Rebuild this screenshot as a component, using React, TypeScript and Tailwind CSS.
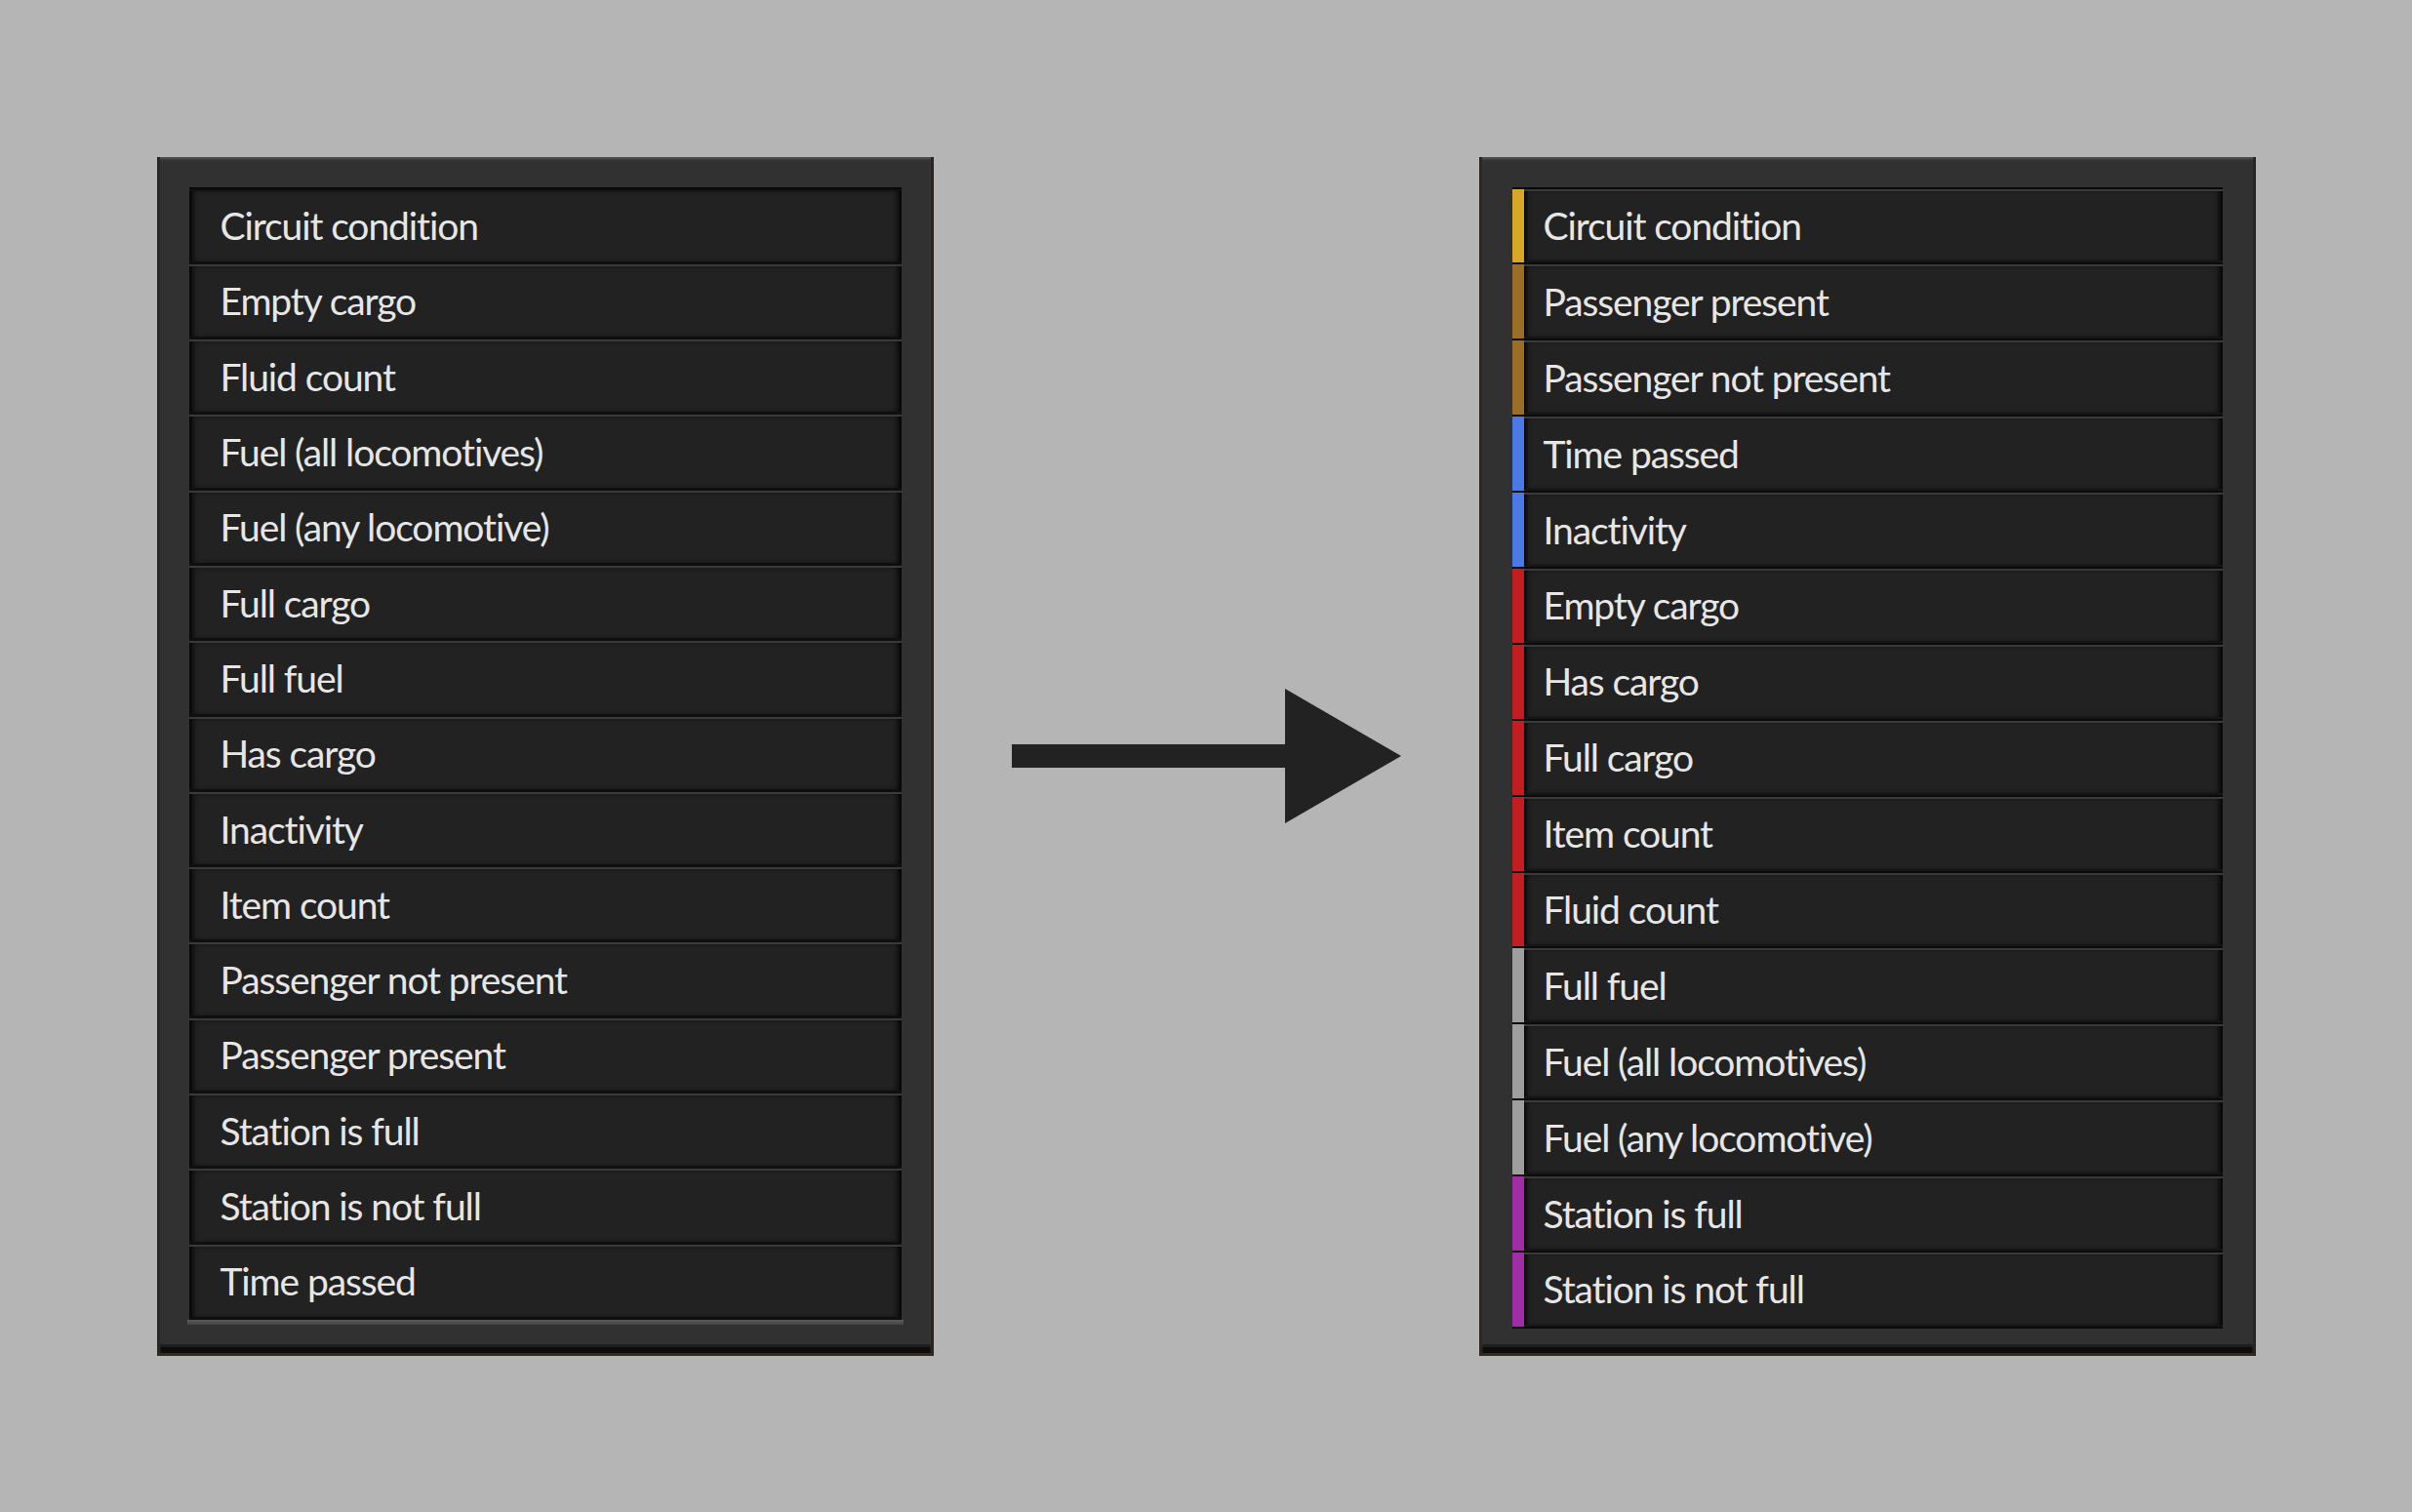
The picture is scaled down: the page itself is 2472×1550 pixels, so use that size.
import React from "react";

const leftItems = [
  "Circuit condition",
  "Empty cargo",
  "Fluid count",
  "Fuel (all locomotives)",
  "Fuel (any locomotive)",
  "Full cargo",
  "Full fuel",
  "Has cargo",
  "Inactivity",
  "Item count",
  "Passenger not present",
  "Passenger present",
  "Station is full",
  "Station is not full",
  "Time passed",
];

const rightItems: { label: string; color: string }[] = [
  { label: "Circuit condition", color: "bg-[#d6a823]" },
  { label: "Passenger present", color: "bg-[#9b6e27]" },
  { label: "Passenger not present", color: "bg-[#9b6e27]" },
  { label: "Time passed", color: "bg-[#4b79e6]" },
  { label: "Inactivity", color: "bg-[#4b79e6]" },
  { label: "Empty cargo", color: "bg-[#c21d20]" },
  { label: "Has cargo", color: "bg-[#c21d20]" },
  { label: "Full cargo", color: "bg-[#c21d20]" },
  { label: "Item count", color: "bg-[#c21d20]" },
  { label: "Fluid count", color: "bg-[#c21d20]" },
  { label: "Full fuel", color: "bg-[#9e9e9e]" },
  { label: "Fuel (all locomotives)", color: "bg-[#9e9e9e]" },
  { label: "Fuel (any locomotive)", color: "bg-[#9e9e9e]" },
  { label: "Station is full", color: "bg-[#a02ca6]" },
  { label: "Station is not full", color: "bg-[#a02ca6]" },
];

const textCls =
  "font-['Lato','Open_Sans',sans-serif] text-[39px] tracking-[-1.1px] text-[#e6e6e6] leading-none whitespace-nowrap";

function Frame({ children }: { children: React.ReactNode }) {
  return (
    <div className="w-[796px] h-[1229px] flex flex-col bg-[#313131] border-x-[3px] border-x-[#2a2522] border-b-[3px] border-b-[#3a2a15] shadow-[inset_0_2px_0_#4e4e4e,inset_0_4px_2px_#3a3a3a,inset_0_-6px_0_#0d0d0d,inset_0_-9px_0_#1e1e1e]">
      {children}
    </div>
  );
}

function LeftPanel() {
  return (
    <Frame>
      <div className="flex flex-col pt-[31px] px-[30px]">
        <div className="flex flex-col border-t-[2px] border-t-[#080808]">
          {leftItems.map((t) => (
            <div
              key={t}
              className="h-[77.3px] flex items-center pl-[32px] bg-[#222222] border-t-[2px] border-t-[#3a3a3a] border-b-[3px] border-b-[#0f0f0f] shadow-[inset_7px_0_6px_-4px_#000,inset_-7px_0_6px_-4px_#000] first:border-t-[#111]"
            >
              <span className={textCls}>{t}</span>
            </div>
          ))}
        </div>
        <div className="h-[5px] mx-[-2px] bg-gradient-to-b from-[#5a5a5a] to-[#454545]" />
      </div>
    </Frame>
  );
}

function RightPanel() {
  return (
    <Frame>
      <div className="flex flex-col pt-[31px] px-[31px]">
        <div className="flex flex-col border-t-[2px] border-t-[#080808]">
          {rightItems.map((it) => (
            <div
              key={it.label}
              className="h-[77.9px] flex border-b-[2px] border-b-[#0b0b0b] bg-[#222222]"
            >
              <div className={`w-[12px] shrink-0 ${it.color}`} />
              <div className="flex-1 flex items-center pl-[20px] border-t-[2px] border-t-[#3a3a3a] border-b-[2px] border-b-[#151515] shadow-[inset_-7px_0_6px_-4px_#000,inset_6px_0_5px_-4px_#000]">
                <span className={textCls}>{it.label}</span>
              </div>
            </div>
          ))}
        </div>
      </div>
    </Frame>
  );
}

function Arrow() {
  return (
    <svg width="399" height="138" viewBox="0 0 399 138" className="shrink-0">
      <rect x="0" y="57" width="282" height="24" fill="#222222" />
      <polygon points="280,0 399,69 280,138" fill="#222222" />
    </svg>
  );
}

export default function App() {
  return (
    <div className="w-[2472px] h-[1550px] bg-[#b5b5b5] flex items-center justify-center gap-[80px]">
      <LeftPanel />
      <Arrow />
      <RightPanel />
    </div>
  );
}
